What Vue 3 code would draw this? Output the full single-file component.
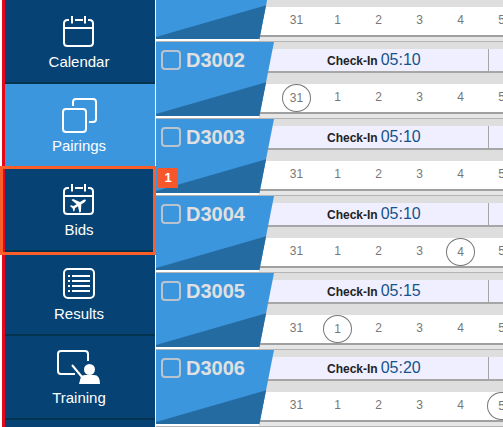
<script setup>
import { ref } from 'vue'

const menu = [
  { id: 'calendar', label: 'Calendar' },
  { id: 'pairings', label: 'Pairings', active: true },
  { id: 'bids', label: 'Bids', marker: '1' },
  { id: 'results', label: 'Results' },
  { id: 'training', label: 'Training' },
]

const days = [31, 1, 2, 3, 4, 5]

const rows = ref([
  { code: '', time: '', day: null, checked: false },
  { code: 'D3002', time: '05:10', day: 31, checked: false },
  { code: 'D3003', time: '05:10', day: null, checked: false },
  { code: 'D3004', time: '05:10', day: 4, checked: false },
  { code: 'D3005', time: '05:15', day: 1, checked: false },
  { code: 'D3006', time: '05:20', day: 5, checked: false },
])
</script>

<template>
  <div class="page">
    <nav class="sidebar">
      <a
        v-for="item in menu"
        :key="item.id"
        :href="'#' + item.id"
        class="item"
        :class="{ active: item.active, marked: item.marker }"
      >
        <svg v-if="item.id === 'calendar' || item.id === 'bids'" class="icon" viewBox="0 0 48 36" aria-hidden="true">
          <g fill="none" stroke="#fff" stroke-width="2">
            <path d="M14 6H12.500Q9 6 9 9.500V28.500Q9 32 12.500 32H34.500Q38 32 38 28.500V9.500Q38 6 34.500 6H33" />
            <path d="M20 6H28M9 14H38M17 2V9.500M30 2V9.500" />
          </g>
          <path
            v-if="item.id === 'bids'"
            fill="#fff"
            transform="translate(23.500 22.500) rotate(58)"
            d="M0 -8.500C1 -8.500 1.300 -7 1.300 -5.500V-2.500L7.500 1.800V3.600L1.300 1.400V5L3.300 6.800V8L0 7L-3.300 8V6.800L-1.300 5V1.400L-7.500 3.600V1.800L-1.300 -2.500V-5.500C-1.300 -7 -1 -8.500 0 -8.500Z"
          />
        </svg>
        <svg v-else-if="item.id === 'pairings'" class="icon" viewBox="0 0 48 36" aria-hidden="true">
          <g fill="none" stroke="#fff" stroke-width="2">
            <path d="M18 8V4Q18 1 21 1H38Q41 1 41 4V21Q41 24 38 24H34" />
            <rect x="8" y="11" width="23" height="23" rx="3" />
          </g>
        </svg>
        <svg v-else-if="item.id === 'results'" class="icon" viewBox="0 0 48 36" aria-hidden="true">
          <g fill="none" stroke="#fff" stroke-width="2">
            <rect x="9" y="3" width="30" height="29" rx="4" />
            <path d="M13 10H15M17 10H35M13 15H15M17 15H35M13 20H15M17 20H35M13 25H15M17 25H35" />
          </g>
        </svg>
        <svg v-else class="icon" viewBox="0 0 48 36" aria-hidden="true">
          <path
            d="M20 24H6Q3 24 3 21V4Q3 1 6 1H30Q33 1 33 4V11"
            fill="none"
            stroke="#fff"
            stroke-width="2"
          />
          <path d="M17 15L27 27" fill="none" stroke="#fff" stroke-width="2" />
          <circle cx="34.500" cy="19.500" r="5.500" fill="#fff" />
          <path d="M24 34L26 26.500Q27 25 30 25H39Q45 25 45 34Z" fill="#fff" />
        </svg>
        <span class="label">{{ item.label }}</span>
        <span v-if="item.marker" class="frame"><b class="badge">{{ item.marker }}</b></span>
      </a>
    </nav>

    <main class="list">
      <section v-for="(row, i) in rows" :key="i" class="row">
        <div class="bands">
          <div class="checkin">
            <p v-if="row.code" class="slot">
              <b>Check-In</b><time>{{ row.time }}</time>
            </p>
          </div>
          <ol class="days">
            <li v-for="d in days" :key="d" :class="{ ringed: d === row.day }">{{ d }}</li>
          </ol>
          <div class="edge"></div>
        </div>
        <div class="tag">
          <label v-if="row.code" class="pick">
            <input v-model="row.checked" type="checkbox" />
            <span>{{ row.code }}</span>
          </label>
        </div>
      </section>
    </main>
  </div>
</template>

<style>
body {
  margin: 0;
  background: #fff;
}
</style>

<style scoped>
.page {
  display: flex;
  height: 100vh;
  overflow: hidden;
  font-family: "Liberation Sans", Arial, sans-serif;
}

.sidebar {
  flex: none;
  width: 150px;
  margin: 0 1px 0 2px;
  border-left: 3px solid #e3091a;
  background: #064374;
}

.item {
  position: relative;
  display: flex;
  flex-direction: column;
  align-items: center;
  box-sizing: border-box;
  height: 84px;
  padding: 14px 2px 0 0;
  border-bottom: 2px solid #03334f;
  color: #fff;
  font-size: 15px;
  line-height: 18px;
  text-decoration: none;
}

.item.active {
  background: #3c96de;
}

.icon {
  width: 48px;
  height: 36px;
  margin-bottom: 3px;
}

.frame {
  position: absolute;
  z-index: 2;
  inset: -2px -1px -5px -5px;
  border: 3px solid #fa5f2a;
}

.badge {
  position: absolute;
  top: -1px;
  left: 100%;
  width: 20px;
  margin-left: 5px;
  background: #f7572a;
  font-size: 13px;
  line-height: 20px;
  text-align: center;
}

.list {
  flex: 1;
  min-width: 0;
  margin-top: -35px;
  overflow: hidden;
}

.row {
  display: grid;
}

.bands,
.tag {
  grid-area: 1 / 1;
  min-width: 0;
}

.checkin {
  box-sizing: border-box;
  height: 31px;
  border-top: 7px solid #dedede;
  border-bottom: 2px solid #a6a6a6;
  background: #efefff;
}

.slot {
  display: flex;
  align-items: baseline;
  gap: 3px;
  box-sizing: border-box;
  width: 333px;
  margin: 0;
  padding-left: 171px;
  border-right: 1px solid #a6a6a6;
  color: #222;
  font-size: 12px;
  line-height: 22px;
}

.slot time {
  color: #15538c;
  font-size: 16px;
}

.days {
  display: flex;
  margin: 0;
  padding: 0 0 0 120px;
  border-top: 11px solid #dedede;
  list-style: none;
}

.days li {
  flex: none;
  width: 41px;
  height: 28px;
  color: #777;
  font-size: 12px;
  line-height: 26px;
  text-align: center;
}

.days .ringed {
  box-sizing: border-box;
  width: 29px;
  height: 28px;
  margin: 0 6px;
  border: 1px solid #777;
  border-radius: 50%;
}

.edge {
  height: 4px;
  border-top: 2px solid #a0a0a0;
  border-bottom: 1px solid #b4b4b4;
  background: #e6e6e6;
}

.tag {
  position: relative;
  width: 118px;
  height: 74px;
  border-bottom: 2px solid #fff;
  background: #3c96de;
  clip-path: polygon(0 0, 100% 0, 103px 100%, 0 100%);
}

.tag::before {
  content: "";
  position: absolute;
  inset: 0;
  background: #246ba2;
  clip-path: polygon(0 72px, 100% 38px, 100% 100%, 0 100%);
}

.pick {
  position: relative;
  display: flex;
  align-items: center;
  gap: 5px;
  padding: 7px 0 0 5px;
  color: #e0e0e0;
  font-size: 20px;
  font-weight: bold;
  line-height: 22px;
}

.pick input {
  appearance: none;
  box-sizing: border-box;
  width: 20px;
  height: 20px;
  margin: 0;
  border: 2px solid #b9c4cf;
  border-radius: 4px;
}
</style>
